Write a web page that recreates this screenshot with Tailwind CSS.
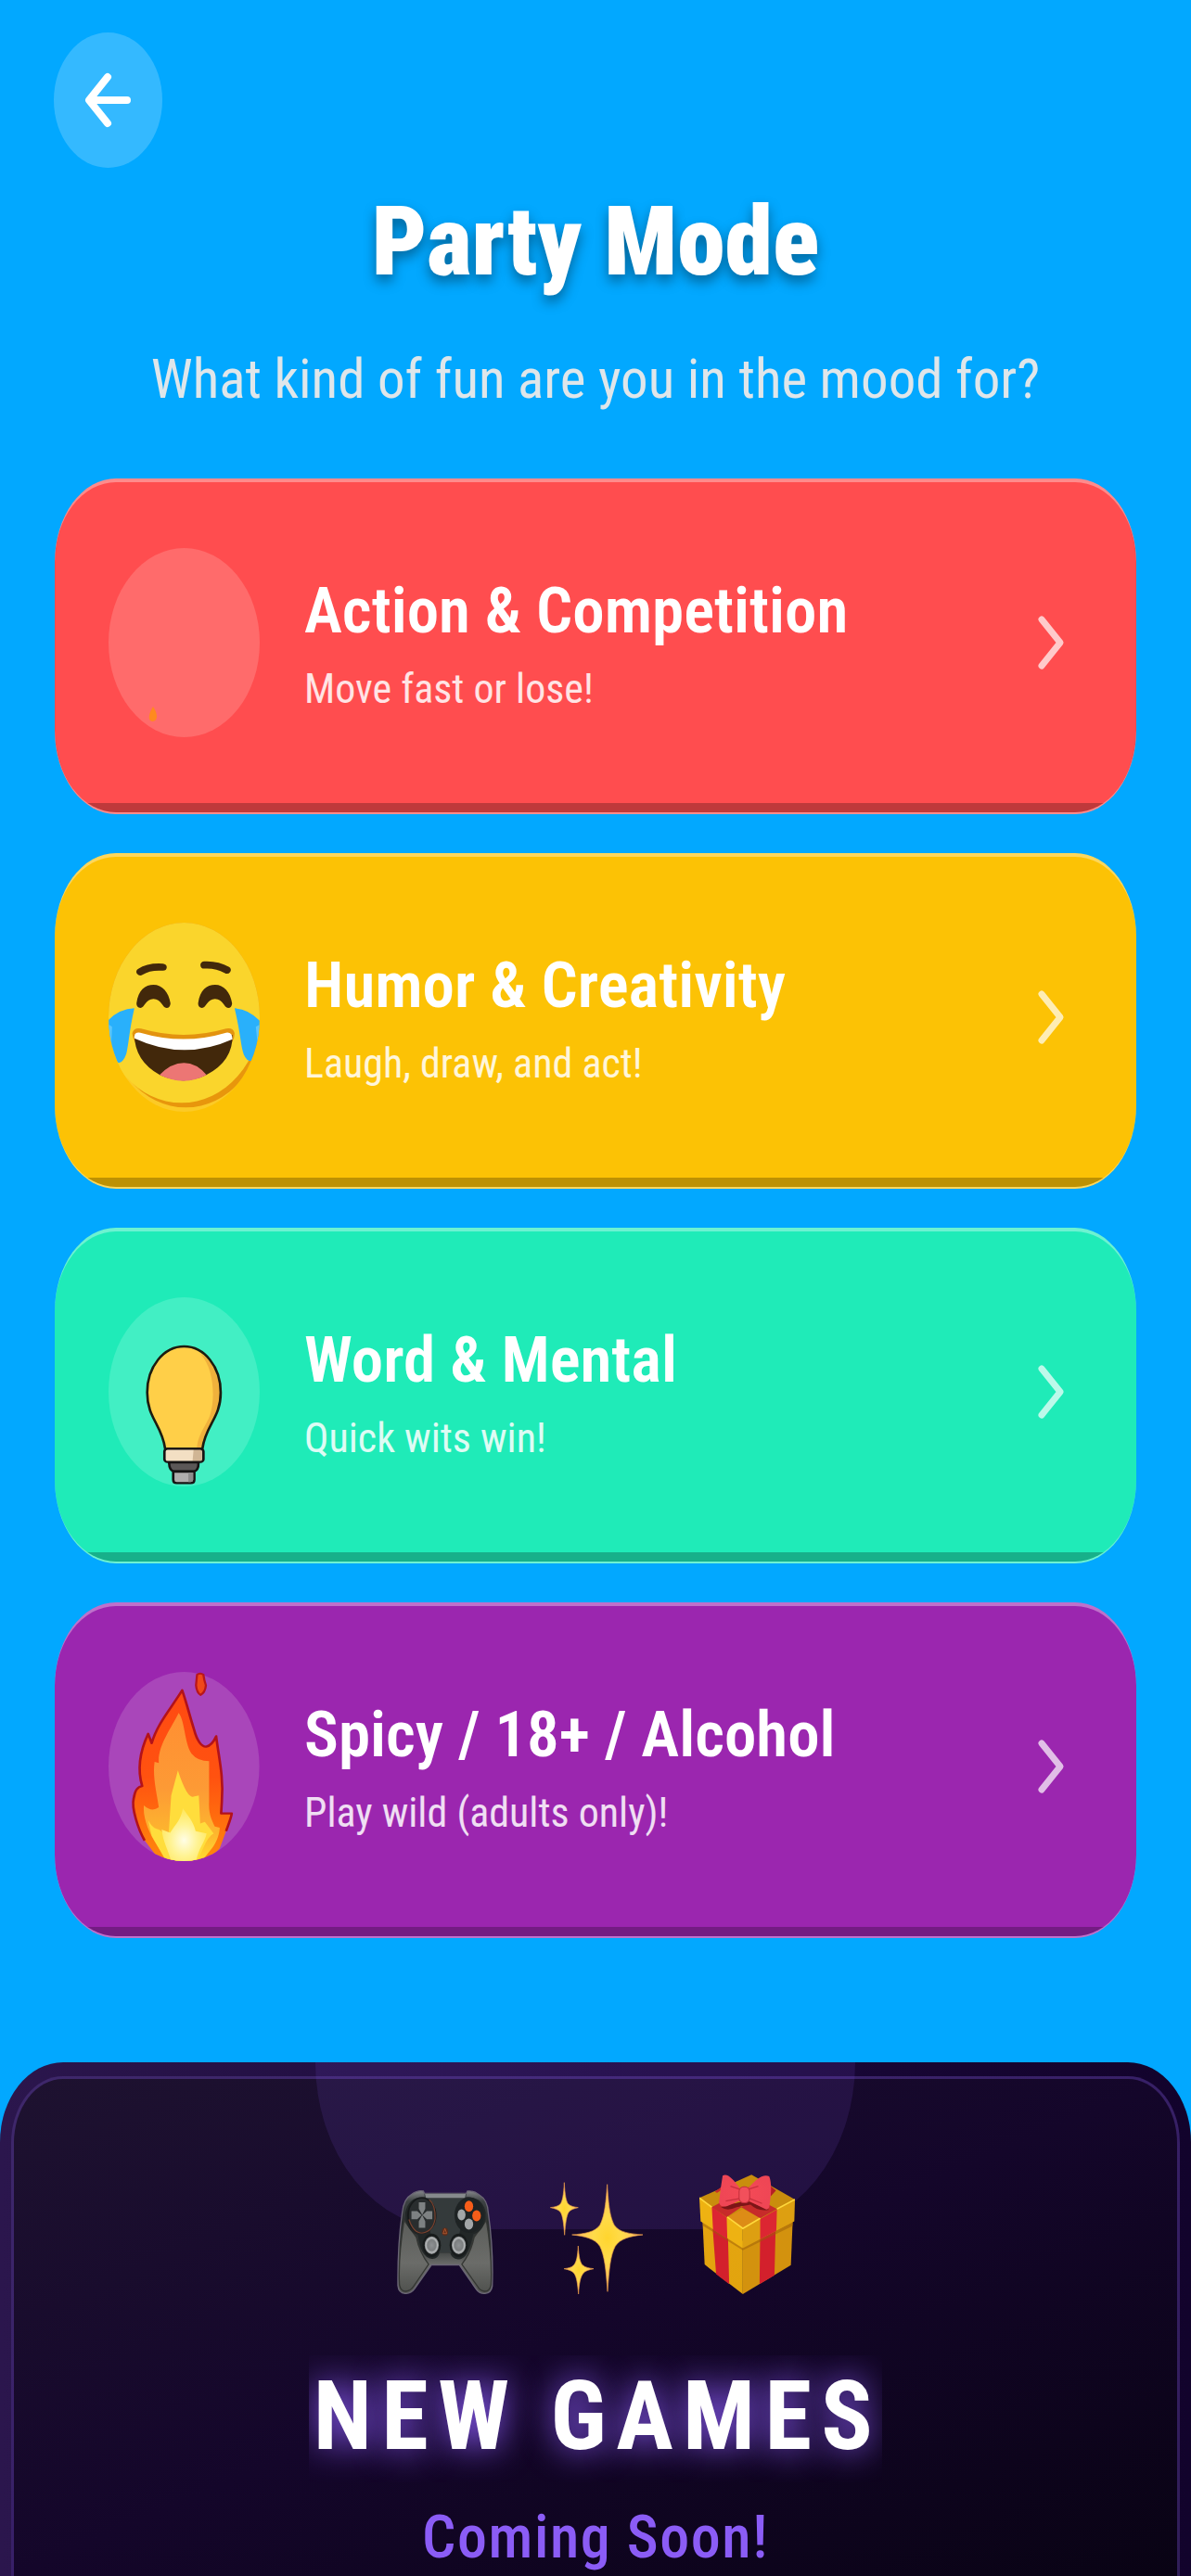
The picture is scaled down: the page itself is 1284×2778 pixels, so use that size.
<!DOCTYPE html>
<html lang="en">
<head>
  <meta charset="UTF-8" />
  <meta name="viewport" content="width=device-width, initial-scale=1.0"/>
  <title>Party Mode</title>
  <script src="https://cdn.jsdelivr.net/npm/@tailwindcss/browser@4"></script>
</head>
<body class="bg-[#02a8ff] min-h-screen flex flex-col font-['Roboto_Condensed','Roboto',sans-serif] text-white">
  <header class="px-[58px] pt-[35px]">
    <button aria-label="Back" class="flex items-center justify-center w-[117px] h-[146px] rounded-[50%] bg-white/20">
      <svg class="w-[54px] h-[64px]" viewBox="0 0 54 64" fill="none" stroke="#fff" stroke-width="8" stroke-linecap="round" stroke-linejoin="round">
        <path d="M26 7 L6 32 L26 57 M7 32 H47"/>
      </svg>
    </button>
  </header>

  <main class="px-[59px] flex flex-col">
    <h1 class="self-center mt-[24px] h-[120px] leading-[112px] text-[104px] font-black [text-shadow:0_7px_14px_rgba(0,0,0,0.4)]">Party Mode</h1>
    <p class="self-center mt-[46px] leading-[76px] text-[59px] text-[#dfe6ea]">What kind of fun are you in the mood for?</p>

    <div class="mt-[69px] flex flex-col gap-[42px]">
      <button class="relative overflow-hidden flex items-center h-[362px] pl-[58px] pr-[74px] pb-[10px] rounded-[66px/90px] border-t-4 border-b-2 border-white/35 bg-[#ff4d4f] text-left">
        <svg class="shrink-0 w-[163px] h-[204px]" viewBox="0 0 163 204">
          <ellipse cx="81.5" cy="102" rx="81.5" ry="102" fill="#ff6b6b"/>
          <path d="M48 171 C53 178 54 187 47 187 C42 186 43 179 48 171Z" fill="#ff8a1f"/>
        </svg>
        <span class="ml-[48px] pt-[8px] flex-1 flex flex-col">
          <span class="text-[69px] leading-[80px] font-semibold">Action &amp; Competition</span>
          <span class="text-[44px] leading-[64px] mt-[12px] text-white/85">Move fast or lose!</span>
        </span>
        <svg class="shrink-0 w-[36px] h-[64px]" viewBox="0 0 36 64" fill="none" stroke="#fff" stroke-opacity="0.7" stroke-width="7" stroke-linecap="round" stroke-linejoin="round"><path d="M8 7 L28 32 L8 57"/></svg>
        <span class="absolute inset-x-0 bottom-0 h-[10px] bg-black/25"></span>
      </button>

      <button class="relative overflow-hidden flex items-center h-[362px] pl-[58px] pr-[74px] pb-[10px] rounded-[66px/90px] border-t-4 border-b-2 border-white/35 bg-[#fcc205] text-left">
        <svg class="shrink-0 w-[163px] h-[204px]" viewBox="148 287 427 612" preserveAspectRatio="none">
          <clipPath id="disc"><ellipse cx="361.5" cy="593" rx="213.5" ry="306"/></clipPath>
          <g clip-path="url(#disc)">
            <rect x="148" y="287" width="427" height="612" fill="#fcca26"/>
            <ellipse cx="366" cy="585" rx="222" ry="300" fill="#e8960c"/>
            <ellipse cx="354" cy="570" rx="226" ry="300" fill="#fad52c"/>
            <path d="M146 604 Q178 566 221 564 C206 640 204 690 198 712 Q190 738 176 741 C150 715 145 650 146 604Z" fill="#29b0fb"/>
            <path d="M578 608 Q545 566 504 564 C520 640 522 690 530 714 Q538 735 550 735 C574 700 578 650 578 608Z" fill="#29b0fb"/>
            <path d="M148 616 L158 624 L156 680 L148 660Z M576 616 L564 624 L569 680 L576 660Z" fill="#5cc6fb"/>
          </g>
          <path d="M238 446 Q262 428 301 431 M419 424 Q455 422 482 440" fill="none" stroke="#42280b" stroke-width="23" stroke-linecap="round"/>
          <path d="M227 548 C232 505 252 488 275 488 C300 488 318 512 323 548 Q322 563 312 563 C300 563 297 534 275 534 C253 534 250 563 238 563 Q227 562 227 548Z M401 548 C406 505 426 488 449 488 C474 488 492 512 497 548 Q496 563 486 563 C474 563 471 534 449 534 C427 534 424 563 412 563 Q401 562 401 548Z" fill="#42280b"/>
          <path d="M215 645 Q220 625 240 630 Q360 670 480 630 Q500 625 504 645 Q504 660 498 672 L222 672 Q216 660 215 645Z" fill="#e3930f"/>
          <path d="M221 650 Q360 700 498 650 Q500 735 424 780 Q361 815 293 780 Q222 735 221 650Z" fill="#42280b"/>
          <path d="M221 655 Q222 640 238 643 Q360 684 480 643 Q498 640 498 664 Q360 735 221 661Z" fill="#fff"/>
          <path d="M292 780 Q325 741 361 741 Q396 741 425 780 Q361 818 292 780Z" fill="#ec7674"/>
        </svg>
        <span class="ml-[48px] pt-[8px] flex-1 flex flex-col">
          <span class="text-[69px] leading-[80px] font-semibold">Humor &amp; Creativity</span>
          <span class="text-[44px] leading-[64px] mt-[12px] text-white/85">Laugh, draw, and act!</span>
        </span>
        <svg class="shrink-0 w-[36px] h-[64px]" viewBox="0 0 36 64" fill="none" stroke="#fff" stroke-opacity="0.7" stroke-width="7" stroke-linecap="round" stroke-linejoin="round"><path d="M8 7 L28 32 L8 57"/></svg>
        <span class="absolute inset-x-0 bottom-0 h-[10px] bg-black/25"></span>
      </button>

      <button class="relative overflow-hidden flex items-center h-[362px] pl-[58px] pr-[74px] pb-[10px] rounded-[66px/90px] border-t-4 border-b-2 border-white/35 bg-[#1febb8] text-left">
        <svg class="shrink-0 w-[163px] h-[204px]" viewBox="148 298 430 612" preserveAspectRatio="none">
          <ellipse cx="363" cy="604" rx="215" ry="306" fill="#42efc4"/>
          <path d="M363 457 C305 457 258 522 258 606 C258 690 300 710 309 788 H415 C424 710 467 690 467 606 C467 522 420 457 363 457Z" fill="#ffcf48"/>
          <path d="M410 482 C450 530 453 640 433 690 C412 735 402 750 399 788 H415 C424 710 467 690 467 606 C467 545 444 500 410 482Z" fill="#f0b13c"/>
          <path d="M363 457 C305 457 258 522 258 606 C258 690 300 710 309 788 H415 C424 710 467 690 467 606 C467 522 420 457 363 457Z" fill="none" stroke="#1c1c10" stroke-width="7"/>
          <path d="M320 832 H404 Q404 861 390 861 H335 Q321 861 320 832Z" fill="#5b5757" stroke="#161414" stroke-width="7"/>
          <path d="M332 862 H392 V888 Q392 899 382 899 H342 Q332 899 332 888Z" fill="#b0adad" stroke="#161414" stroke-width="7"/>
          <path d="M375 865 H389 V888 Q388 896 375 896Z" fill="#8e8c8c"/>
          <rect x="307" y="788" width="111" height="43" rx="9" fill="#f3dfc3"/>
          <path d="M390 790 H414 V828 H387Z" fill="#d0b594"/>
          <rect x="307" y="788" width="111" height="43" rx="9" fill="none" stroke="#161414" stroke-width="7"/>
        </svg>
        <span class="ml-[48px] pt-[8px] flex-1 flex flex-col">
          <span class="text-[69px] leading-[80px] font-semibold">Word &amp; Mental</span>
          <span class="text-[44px] leading-[64px] mt-[12px] text-white/85">Quick wits win!</span>
        </span>
        <svg class="shrink-0 w-[36px] h-[64px]" viewBox="0 0 36 64" fill="none" stroke="#fff" stroke-opacity="0.7" stroke-width="7" stroke-linecap="round" stroke-linejoin="round"><path d="M8 7 L28 32 L8 57"/></svg>
        <span class="absolute inset-x-0 bottom-0 h-[10px] bg-black/25"></span>
      </button>

      <button class="relative overflow-hidden flex items-center h-[362px] pl-[58px] pr-[74px] pb-[10px] rounded-[66px/90px] border-t-4 border-b-2 border-white/35 bg-[#9b26af] text-left">
        <svg class="shrink-0 w-[163px] h-[204px]" viewBox="148 283 427 608" preserveAspectRatio="none">
          <defs>
            <clipPath id="flameDisc"><ellipse cx="361" cy="587" rx="213" ry="304"/></clipPath>
            <linearGradient id="flameOuter" x1="0" y1="0" x2="0" y2="1"><stop offset="0" stop-color="#ff4a12"/><stop offset="0.5" stop-color="#ff5210"/><stop offset="1" stop-color="#ff8a0c"/></linearGradient>
            <linearGradient id="flameMid" x1="0" y1="0" x2="0" y2="1"><stop offset="0" stop-color="#ff8f32"/><stop offset="0.5" stop-color="#fd9a35"/><stop offset="0.8" stop-color="#fdb62e"/><stop offset="1" stop-color="#ffdf30"/></linearGradient>
            <radialGradient id="flameCore" cx="0.5" cy="0.6" r="0.6"><stop offset="0" stop-color="#fffde6"/><stop offset="0.5" stop-color="#fff394"/><stop offset="1" stop-color="#ffe658"/></radialGradient>
          </defs>
          <ellipse cx="361" cy="587" rx="213" ry="304" fill="#a946ba"/>
          <g clip-path="url(#flameDisc)" stroke-linejoin="round">
            <path d="M356 342 C368 380 376 420 390 470 C398 505 412 525 424 523 C438 520 446 505 452 490 C458 550 474 620 468 700 L466 738 H496 C494 755 484 780 480 795 L462 850 L420 900 H300 L250 825 C232 790 212 720 219 690 Q224 652 243 650 C230 600 236 540 260 482 L270 512 C285 450 325 400 356 342Z" fill="url(#flameOuter)"/>
            <path d="M250 825 C232 790 212 720 219 690 Q224 652 243 650 C230 600 236 540 260 482 L270 512 C285 450 325 400 356 342 C368 380 376 420 390 470 C398 505 412 525 424 523 C438 520 446 505 452 490 C458 550 474 620 468 700 L466 738 H496 C494 755 484 780 480 795" fill="none" stroke="#b3121a" stroke-width="7"/>
            <path d="M346 415 C328 460 286 520 290 576 L278 572 C272 620 284 670 290 718 Q270 735 248 712 C244 750 262 800 285 840 L320 900 H405 L440 850 C455 830 462 800 462 784 L448 780 C440 760 430 740 432 700 V570 Q400 570 382 545 C362 510 364 440 346 415Z" fill="url(#flameMid)"/>
            <path d="M260 760 C280 800 290 780 300 800 L318 800 L325 680 L344 600 C358 650 375 690 388 684 L403 680 L407 770 L420 765 L445 802 Q430 810 415 850 L395 900 H315 L270 810Z" fill="#ffdd3c"/>
            <path d="M358 722 C352 760 336 775 322 800 L298 790 C302 830 318 860 325 892 H395 C402 850 420 830 425 802 L394 795 C388 765 372 745 358 722Z" fill="url(#flameCore)"/>
          </g>
          <path d="M398 292 Q407 284 416 292 Q418 310 423 326 Q421 350 408 357 Q397 350 395 326Z" fill="#f0481a" stroke="#b8161b" stroke-width="6"/>
        </svg>
        <span class="ml-[48px] pt-[8px] flex-1 flex flex-col">
          <span class="text-[69px] leading-[80px] font-semibold">Spicy / 18+ / Alcohol</span>
          <span class="text-[44px] leading-[64px] mt-[12px] text-white/85">Play wild (adults only)!</span>
        </span>
        <svg class="shrink-0 w-[36px] h-[64px]" viewBox="0 0 36 64" fill="none" stroke="#fff" stroke-opacity="0.7" stroke-width="7" stroke-linecap="round" stroke-linejoin="round"><path d="M8 7 L28 32 L8 57"/></svg>
        <span class="absolute inset-x-0 bottom-0 h-[10px] bg-black/25"></span>
      </button>
    </div>
  </main>

  <section class="relative overflow-hidden mt-[134px] flex-1 flex flex-col px-[12px] pt-[15px] rounded-t-[68px_86px] bg-linear-to-r from-[#2b164d] via-[#1c0a3c] to-[#12032c]">
    <div class="flex-1 flex flex-col items-center border-[3px] border-b-0 border-[#8b5cf6]/30 rounded-t-[56px_72px] bg-linear-to-br from-[#1e1230] via-[#14062a] to-[#090314] bg-origin-border">
      <div class="relative z-10 mt-[103px] flex items-end gap-[61px]">
        <!-- controller -->
        <svg class="w-[104px] h-[112px]" viewBox="77 127 314 338" preserveAspectRatio="none">
          <defs>
            <linearGradient id="padBody" x1="0" y1="0" x2="0" y2="1"><stop offset="0" stop-color="#85878a"/><stop offset="0.1" stop-color="#3d4243"/><stop offset="0.3" stop-color="#2a2e2f"/><stop offset="0.55" stop-color="#343837"/><stop offset="0.72" stop-color="#6c6d6b"/><stop offset="1" stop-color="#555653"/></linearGradient>
            <linearGradient id="grip" x1="0" y1="0" x2="0" y2="1"><stop offset="0" stop-color="#5b5d5a"/><stop offset="0.6" stop-color="#6b6c69"/><stop offset="1" stop-color="#50524f"/></linearGradient>
            <radialGradient id="stick"><stop offset="0" stop-color="#8e9193"/><stop offset="0.6" stop-color="#7c7f80"/><stop offset="0.8" stop-color="#b6b9ba"/><stop offset="1" stop-color="#808384"/></radialGradient>
          </defs>
          <path d="M125 140 Q145 126 163 130 L166 137 H303 L306 130 Q325 127 345 142 Q372 158 374 200 C384 270 390 360 387 440 Q383 464 360 463 Q344 463 334 448 L280 370 H189 L134 448 Q122 464 103 463 Q82 462 80 438 C79 350 84 270 94 200 Q98 155 125 140Z" fill="url(#padBody)" stroke="#6b6676" stroke-width="4"/>
          <path d="M100 225 C88 300 82 380 85 435 Q90 457 106 456 Q122 454 132 438 L180 368 Q150 330 140 280Z M368 225 C380 300 386 380 383 435 Q378 457 362 456 Q346 454 338 438 L288 368 Q318 330 328 280Z" fill="url(#grip)" stroke="#343633" stroke-width="4"/>
          <path d="M104 200 Q115 150 160 150 H308 Q355 150 366 200 Q365 260 325 270 C312 330 300 352 275 352 Q255 350 250 330 H216 Q210 352 190 350 C165 348 152 320 145 272 Q105 260 104 200Z" fill="#222727"/>
          <path d="M166 138 H303 Q290 250 262 330 H208 Q170 240 166 138Z" fill="#343a3b"/>
          <path d="M168 139 H301 L298 152 H171Z" fill="#868a8c"/>
          <ellipse cx="158" cy="209" rx="45" ry="57" fill="#292d2e" stroke="#16191a" stroke-width="5"/>
          <path d="M116 222 Q130 266 158 266 Q194 262 201 220 Q203 175 182 158" fill="none" stroke="#74412f" stroke-width="4"/>
          <path d="M148 166 H169 V187 L159 207 L148 187Z M148 249 H169 V228 L159 208 L148 228Z M124 195 H143 L157 208 L143 221 H124Z M192 195 H174 L160 208 L174 221 H192Z" fill="#7d8182"/>
          <ellipse cx="312" cy="208" rx="48" ry="58" fill="#1e2324"/>
          <ellipse cx="311" cy="179" rx="14" ry="18" fill="#f75d19"/>
          <ellipse cx="336" cy="210" rx="14" ry="18" fill="#f75d19"/>
          <ellipse cx="287" cy="207" rx="13" ry="18" fill="#a2a6a8"/>
          <ellipse cx="311" cy="237" rx="14" ry="18" fill="#a2a6a8"/>
          <ellipse cx="190" cy="306" rx="30" ry="38" fill="#181c1c"/>
          <ellipse cx="278" cy="306" rx="30" ry="38" fill="#181c1c"/>
          <ellipse cx="190" cy="306" rx="23" ry="29" fill="url(#stick)"/>
          <ellipse cx="278" cy="306" rx="23" ry="29" fill="url(#stick)"/>
          <ellipse cx="233" cy="262" rx="10" ry="13" fill="#5c2c1a"/>
          <path d="M233 252 L239 268 H227Z" fill="none" stroke="#a8552d" stroke-width="3"/>
        </svg>
        <!-- sparkles -->
        <svg class="w-[100px] h-[121px]" viewBox="577 92 300 363" preserveAspectRatio="none">
          <defs>
            <radialGradient id="spark"><stop offset="0" stop-color="#ffd52e"/><stop offset="0.4" stop-color="#ffdb4a"/><stop offset="1" stop-color="#ffb765"/></radialGradient>
          </defs>
          <g fill="url(#spark)" stroke="#e89a4a" stroke-width="2">
            <path d="M762 100 C766 170 771 205 785 232 C800 255 835 260 877 263 C835 268 805 275 788 300 C772 330 768 375 763 447 C758 375 753 330 738 300 C722 275 690 268 648 263 C690 260 722 254 738 232 C752 205 757 170 762 100Z"/>
            <path d="M623 94 C625 135 629 155 636 164 C644 171 655 173 668 175 C655 178 644 181 637 190 C630 202 627 225 624 264 C621 225 618 202 611 190 C604 181 592 178 578 175 C592 173 603 171 610 164 C617 155 621 135 623 94Z"/>
            <path d="M668 299 C670 335 674 352 682 361 C691 369 704 371 718 373 C704 376 691 379 684 388 C675 400 671 420 669 455 C666 420 663 400 655 388 C648 379 636 376 622 373 C636 371 647 369 654 361 C662 352 666 335 668 299Z"/>
          </g>
        </svg>
        <!-- gift box -->
        <svg class="w-[103px] h-[129px]" viewBox="1060 74 308 388" preserveAspectRatio="none">
          <defs>
            <linearGradient id="boxFront" x1="0" y1="0" x2="0" y2="1"><stop offset="0" stop-color="#e4a510"/><stop offset="1" stop-color="#e2a40e"/></linearGradient>
            <radialGradient id="bow"><stop offset="0" stop-color="#f44a56"/><stop offset="1" stop-color="#ef4655"/></radialGradient>
          </defs>
          <path d="M1070 220 L1200 290 V462 L1077 366Z" fill="url(#boxFront)"/>
          <path d="M1361 220 L1200 290 V462 L1355 368Z" fill="#d3920e"/>
          <path d="M1102 238 L1152 265 L1156 430 L1114 397Z M1306 240 L1256 265 L1254 430 L1302 401Z" fill="#d3202c"/>
          <path d="M1070 228 L1200 308 L1362 228 V240 L1200 320 L1071 240Z" fill="#9c5d08" opacity="0.5"/>
          <path d="M1060 150 L1200 245 V313 L1064 226Z" fill="#eeb212"/>
          <path d="M1368 155 L1200 245 V313 L1366 226Z" fill="#dd9f11"/>
          <path d="M1100 178 L1148 212 L1150 283 L1104 253Z M1310 186 L1256 215 V284 L1308 257Z" fill="#dc2632"/>
          <path d="M1228 75 L1368 155 L1200 250 L1060 150Z" fill="#c98d0d"/>
          <path d="M1200 186 L1150 212 L1200 248 L1256 214Z" fill="#dd8c16"/>
          <path d="M1100 180 L1240 104 L1280 122 L1148 212Z M1310 186 L1150 100 L1110 130 L1256 216Z" fill="#c72b2a"/>
          <path d="M1060 150 L1100 180 M1150 212 L1200 249 L1256 216 M1310 186 L1368 155" fill="none" stroke="#ffd83c" stroke-width="5"/>
          <path d="M1108 140 L1150 110 L1130 165Z" fill="#c98d0d"/>
          <path d="M1180 180 Q1150 195 1130 180 L1185 165 L1215 160 L1285 188 Q1250 196 1225 172Z" fill="#7d1517"/>
          <path d="M1285 108 L1307 126 L1290 145Z" fill="#b51d25"/>
          <path d="M1190 118 C1170 90 1150 68 1135 78 Q1128 120 1123 165 Q1128 182 1150 176 L1192 158Z M1218 118 C1240 92 1265 70 1285 80 Q1297 110 1285 180 Q1280 192 1268 184 L1216 158Z" fill="url(#bow)"/>
          <path d="M1190 122 L1160 112 M1191 152 L1145 160 M1218 122 L1250 112 M1218 150 L1262 168" stroke="#c9303d" stroke-width="4"/>
          <rect x="1188" y="114" width="34" height="52" rx="15" fill="#f2505b" stroke="#c22f3b" stroke-width="3"/>
        </svg>
      </div>
      <h2 class="relative z-10 mt-[66px] h-[137px] overflow-hidden pl-[5px] leading-[131px] text-[103px] font-bold tracking-widest [text-shadow:0_0_36px_#8b5cf6]">NEW GAMES</h2>
      <p class="relative z-10 mt-[22px] leading-[76px] text-[64px] font-medium tracking-wide text-[#8b5cf6]">Coming Soon!</p>
    </div>
    <div class="absolute top-0 inset-x-0 flex justify-center">
      <div class="w-[582px] h-[180px] mr-[22px] rounded-b-[145px_180px] bg-[#8b5cf6]/12"></div>
    </div>
  </section>
</body>
</html>
